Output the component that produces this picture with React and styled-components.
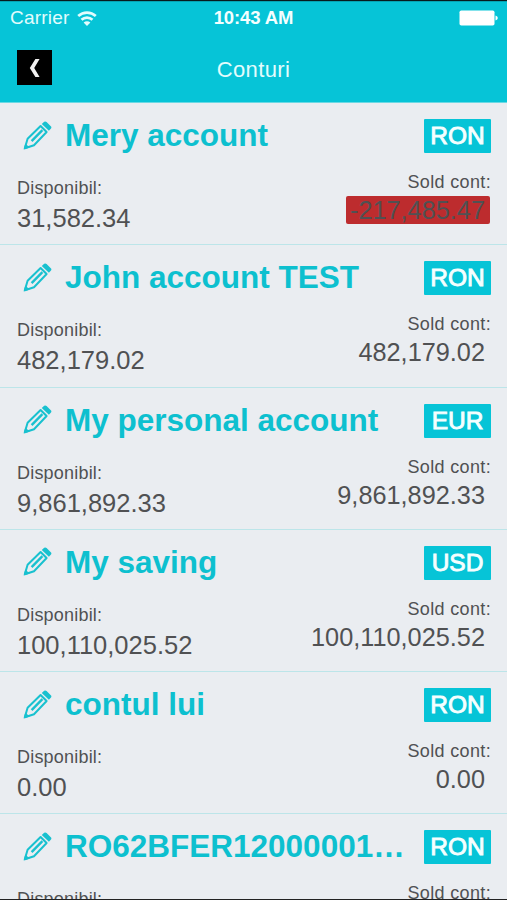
import React from "react";
import styled, { createGlobalStyle } from 'styled-components';

const GlobalStyle = createGlobalStyle`
    body {
        margin: 0;
        background-color: #eaedf1;
        overflow: hidden;
    }
`;

const Screen = styled.div`
    box-sizing: border-box;
    display: flex;
    flex-direction: column;
    width: 507px;
    height: 900px;
    border-top: 1px solid #071b1e;
    border-bottom: 1px solid #222;
    overflow: hidden;
    background-color: #eaedf1;
    color: #505153;
    font-family: "Liberation Sans", Arial, sans-serif;
`;

const Header = styled.header`
    box-sizing: border-box;
    flex: none;
    height: 102px;
    background-color: #06c4d7;
    border-top: 1px solid #05a3b3;
    border-bottom: 1px solid #6bd9e4;
    color: #e2fcfd;
`;

const StatusBar = styled.div`
    display: grid;
    grid-template-columns: 1fr auto 1fr;
    align-items: center;
    height: 32px;
    padding: 0 9px 0 10px;
`;

const Carrier = styled.div`
    display: flex;
    align-items: center;
    gap: 8px;
    font-size: 19px;
    letter-spacing: 0.2px;
`;

const Clock = styled.div`
    margin-right: 1px;
    color: #f4ffff;
    font-size: 18.5px;
    font-weight: 700;
    letter-spacing: -0.1px;
`;

const BatteryIcon = styled.svg`
    justify-self: end;
`;

const NavBar = styled.div`
    display: grid;
    grid-template-columns: 1fr auto 1fr;
    align-items: center;
    height: 68px;
    padding: 0 17px;
`;

const BackButton = styled.button`
    display: flex;
    align-items: center;
    justify-content: center;
    width: 35px;
    height: 35px;
    margin: 0 0 1px;
    padding: 0;
    border: 0;
    background-color: #000;
`;

const NavTitle = styled.h1`
    margin: 4px 0 0;
    font-size: 22px;
    font-weight: 400;
    letter-spacing: 0.4px;
`;

const Row = styled.section`
    box-sizing: border-box;
    flex: none;
    height: 142.25px;
    padding: 16px 16px 0 17px;
    border-bottom: 1.5px solid #bce5e9;
`;

const RowTop = styled.div`
    display: flex;
    align-items: center;
    height: 34px;
`;

const PencilIcon = styled.svg`
    flex: none;
    margin: 0 13px 2px 6px;
`;

const AccountName = styled.h2`
    flex: 1;
    margin: 0 0 2px;
    overflow: hidden;
    color: #0dc0cf;
    font-size: 31.5px;
    font-weight: 700;
    line-height: 36px;
    white-space: nowrap;
`;

const Currency = styled.div`
    box-sizing: border-box;
    width: 67px;
    height: 34px;
    border-radius: 1px;
    background-color: #06c4d7;
    color: #f5ffff;
    font-size: 24.5px;
    line-height: 34px;
    text-align: center;
    -webkit-text-stroke: 0.9px #f5ffff;
`;

const Balances = styled.div`
    display: flex;
    justify-content: space-between;
`;

const Available = styled.div`
    padding-top: 24px;
`;

const Total = styled.div`
    display: flex;
    flex-direction: column;
    align-items: flex-end;
    padding-top: 18px;
`;

const Label = styled.div`
    font-size: 18px;
    line-height: 22px;
    letter-spacing: ${props => props.$wide ? '0.35px' : '0.2px'};
`;

const Amount = styled.div`
    font-size: 25.5px;
    line-height: 28px;
    margin-top: ${props => props.$boxed ? '3px' : '5px'};
    ${props => props.$boxed && `
        margin-right: 1px;
        padding: 0 5px 0 4px;
        border-radius: 2px;
        font-size: 25.3px;
    `}
    background-color: ${props => props.$negative ? '#bd2c2e' : 'transparent'};
`;

const accounts = [
    { name: 'Mery account', currency: 'RON', available: '31,582.34', total: '-217,485.47' },
    { name: 'John account TEST', currency: 'RON', available: '482,179.02', total: '482,179.02' },
    { name: 'My personal account', currency: 'EUR', available: '9,861,892.33', total: '9,861,892.33' },
    { name: 'My saving', currency: 'USD', available: '100,110,025.52', total: '100,110,025.52' },
    { name: 'contul lui', currency: 'RON', available: '0.00', total: '0.00' },
    { name: 'RO62BFER12000001…', currency: 'RON', available: '0.00', total: '0.00' },
];

const Wifi = () => (
    <svg width="20" height="15" viewBox="0 0 20 15" fill="none" stroke="#e2fcfd" strokeWidth="2.7">
        <path d="M1.2 5C6.2 .4 13.8 .4 18.8 5"/>
        <path d="M4.5 8.7c3.2-2.9 7.8-2.9 11 0"/>
        <path d="M10 15l-3.4-3.6c2-1.6 4.8-1.6 6.8 0z" fill="#e2fcfd" stroke="none"/>
    </svg>
);

const Battery = () => (
    <BatteryIcon width="39" height="16" viewBox="0 0 39 16" fill="#fff">
        <rect x="0.5" y="0.5" width="35" height="15" rx="1.8"/>
        <path d="M36.5 5.5q2.3.6 2.3 2.5t-2.3 2.5z"/>
    </BatteryIcon>
);

const Pencil = () => (
    <PencilIcon width="29" height="29" viewBox="0 0 29 29" fill="none" stroke="#18c1cf">
        <path d="M1.8 27.2L4.6 17.8 17.6 5l6 6L11 24.2z" strokeWidth="2" strokeLinejoin="round"/>
        <path d="M.6 28.4l1.7-6 4.4 4.2z" fill="#18c1cf" stroke="none"/>
        <path d="M8.6 20.2L19.4 9.2" strokeWidth="2.4"/>
        <path d="M18.8 2.9L21.2.8q1.3-.9 2.4.2l4.2 4.2q1.1 1.1.2 2.4l-2.1 2.2z" fill="#18c1cf" stroke="none"/>
    </PencilIcon>
);

const AccountRow = ({ account }) => (
    <Row>
        <RowTop>
            <Pencil/>
            <AccountName>{account.name}</AccountName>
            <Currency>{account.currency}</Currency>
        </RowTop>
        <Balances>
            <Available>
                <Label>Disponibil:</Label>
                <Amount>{account.available}</Amount>
            </Available>
            <Total>
                <Label $wide>Sold cont:</Label>
                <Amount $boxed $negative={account.total.startsWith('-')}>{account.total}</Amount>
            </Total>
        </Balances>
    </Row>
);

const App = () => {
    return (
        <Screen>
            <GlobalStyle/>
            <Header>
                <StatusBar>
                    <Carrier>Carrier <Wifi/></Carrier>
                    <Clock>10:43 AM</Clock>
                    <Battery/>
                </StatusBar>
                <NavBar>
                    <BackButton aria-label="Conturi">
                        <svg width="11" height="18" viewBox="0 0 11 18" fill="#f2f2f2">
                            <path d="M6.4 0H10.6L5.2 9l5.4 9H6.4L.8 9z"/>
                        </svg>
                    </BackButton>
                    <NavTitle>Conturi</NavTitle>
                </NavBar>
            </Header>
            {accounts.map(account => <AccountRow key={account.name} account={account}/>)}
        </Screen>
    );
}

export default App;
